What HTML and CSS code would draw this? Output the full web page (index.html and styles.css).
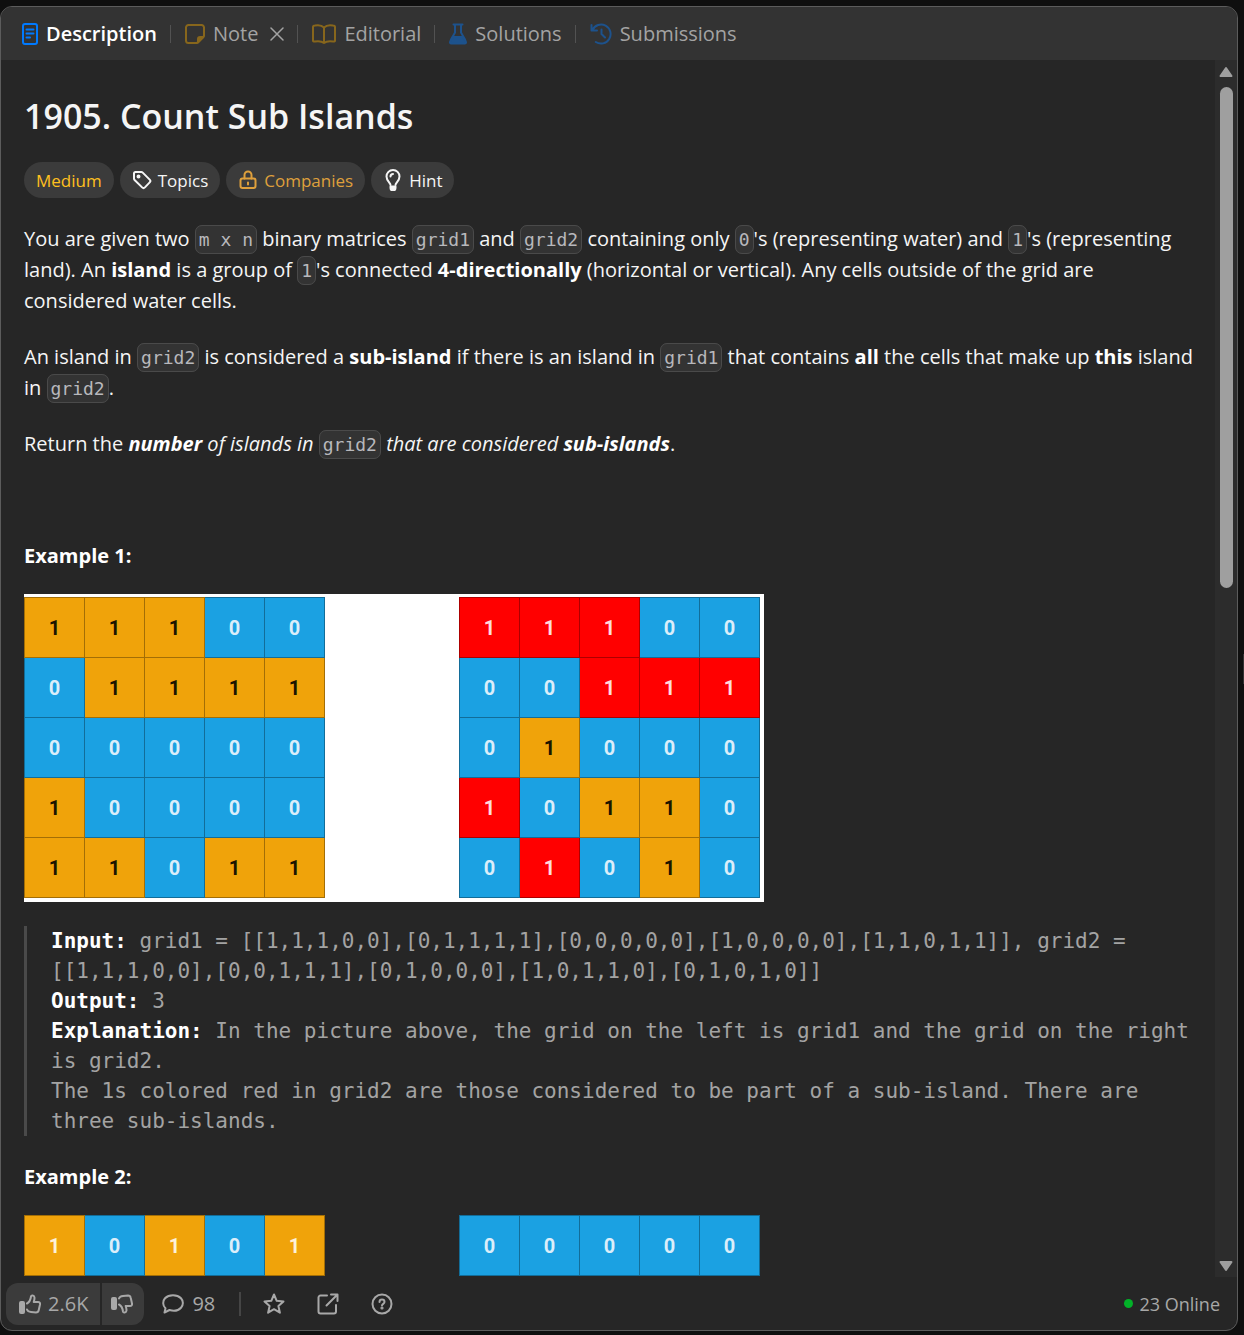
FILE: index.html
```html
<!DOCTYPE html>
<html lang="en">
<head>
<meta charset="utf-8">
<meta name="viewport" content="width=device-width, initial-scale=1">
<title>Count Sub Islands</title>
<link rel="stylesheet" href="styles.css">
</head>
<body>
<main class="panel">
  <nav class="tabs">
    <button class="tab tab-active" type="button">
      <svg class="tab-icon blue" viewBox="0 0 16 22" width="16" height="22"><rect x="1" y="1" width="14" height="20" rx="2"/><path d="M4.500 6.500h7M4.500 10.500h7M4.500 14.500h3.500"/></svg>
      Description
    </button>
    <button class="tab" type="button">
      <svg class="tab-icon gold" viewBox="0 0 20 20" width="20" height="20"><path d="M3.500 1h13A2.500 2.500 0 0 1 19 3.500V12l-7 7H3.500A2.500 2.500 0 0 1 1 16.500v-13A2.500 2.500 0 0 1 3.500 1z"/><path d="M18.500 13H15a2 2 0 0 0-2 2v3.500z" fill="currentColor"/></svg>
      Note
      <svg class="tab-icon close" viewBox="0 0 14 14" width="14" height="14"><path d="M1 1l12 12M13 1L1 13"/></svg>
    </button>
    <button class="tab" type="button">
      <svg class="tab-icon gold" viewBox="0 0 24 20" width="24" height="20"><path d="M12 3.500C9.500 1 5.500 1 3 1.500 1.500 1.500 1 2 1 3v13.500c0 1 .5 1.300 2 1 3.500-.5 6.500-.5 9 1.500 2.500-2 5.500-2 9-1.500 1.500.3 2 0 2-1V3c0-1-.5-1.500-2-1.500-2.500-.5-6.500-.5-9 2zM12 3.500V19"/></svg>
      Editorial
    </button>
    <button class="tab" type="button">
      <svg class="tab-icon navy" viewBox="0 0 18 22" width="18" height="22"><path d="M4.500 1.500h9M6 2v7.500L1.800 17M16.200 17L12 9.500V2"/><path d="M3.800 14h10.400l2.600 4.500c.5 1.300 0 2-1.200 2H2.400c-1.200 0-1.700-.7-1.200-2z" fill="currentColor"/></svg>
      Solutions
    </button>
    <button class="tab" type="button">
      <svg class="tab-icon navy" viewBox="0 0 22 22" width="22" height="22"><path d="M1.500 2v5.500H7M2.500 7A9.500 9.500 0 1 1 5.800 19M11.500 6.500V11l3.500 3.500"/></svg>
      Submissions
    </button>
  </nav>

  <div class="viewport">
    <article class="content">
      <h1>1905. Count Sub Islands</h1>
      <div class="pills">
        <span class="pill medium">Medium</span>
        <button class="pill" type="button">
          <svg class="pill-icon" viewBox="0 0 20 20" width="20" height="20"><path d="M2 3.500A1.500 1.500 0 0 1 3.500 2h5.800a2 2 0 0 1 1.400.6l7 7a2 2 0 0 1 0 2.800l-4.800 5a2 2 0 0 1-2.800 0L2.600 10A2 2 0 0 1 2 8.600z"/><circle cx="6.500" cy="6.500" r="1" fill="currentColor"/></svg>
          Topics
        </button>
        <button class="pill companies" type="button">
          <svg class="pill-icon" viewBox="0 0 20 20" width="20" height="20"><rect x="2.500" y="8.500" width="15" height="9.500" rx="2"/><path d="M6.500 8.500V5a3.500 3.500 0 0 1 7 0v3.500M10 12.500v2"/></svg>
          Companies
        </button>
        <button class="pill" type="button">
          <svg class="pill-icon" viewBox="0 0 20 22" width="20" height="22"><path d="M7.500 16c0-2.500-4-4-4-8.500a6.500 6.500 0 0 1 13 0c0 4.500-4 6-4 8.500M7.500 7.500c0-1.500 1-2.500 2.500-2.500"/><path d="M7.500 17.500h5v1.500a2.500 2.500 0 0 1-5 0z" fill="currentColor"/></svg>
          Hint
        </button>
      </div>

      <p>You are given two <code>m x n</code> binary matrices <code>grid1</code> and <code>grid2</code> containing only <code>0</code>'s (representing water) and <code>1</code>'s (representing<br>land). An <strong>island</strong> is a group of <code>1</code>'s connected <strong>4-directionally</strong> (horizontal or vertical). Any cells outside of the grid are<br>considered water cells.</p>
      <p>An island in <code>grid2</code> is considered a <strong>sub-island</strong> if there is an island in <code>grid1</code> that contains <strong>all</strong> the cells that make up <strong>this</strong> island<br>in <code>grid2</code>.</p>
      <p>Return the <em><strong>number</strong> of islands in </em><code>grid2</code> <em>that are considered <strong>sub-islands</strong></em>.</p>
      <p>&nbsp;</p>
      <p class="example"><strong>Example 1:</strong></p>

      <div class="figure figure-white">
        <table class="matrix">
          <tr><td class="land">1</td><td class="land">1</td><td class="land">1</td><td>0</td><td>0</td></tr>
          <tr><td>0</td><td class="land">1</td><td class="land">1</td><td class="land">1</td><td class="land">1</td></tr>
          <tr><td>0</td><td>0</td><td>0</td><td>0</td><td>0</td></tr>
          <tr><td class="land">1</td><td>0</td><td>0</td><td>0</td><td>0</td></tr>
          <tr><td class="land">1</td><td class="land">1</td><td>0</td><td class="land">1</td><td class="land">1</td></tr>
        </table>
        <table class="matrix">
          <tr><td class="sub">1</td><td class="sub">1</td><td class="sub">1</td><td>0</td><td>0</td></tr>
          <tr><td>0</td><td>0</td><td class="sub">1</td><td class="sub">1</td><td class="sub">1</td></tr>
          <tr><td>0</td><td class="land">1</td><td>0</td><td>0</td><td>0</td></tr>
          <tr><td class="sub">1</td><td>0</td><td class="land">1</td><td class="land">1</td><td>0</td></tr>
          <tr><td>0</td><td class="sub">1</td><td>0</td><td class="land">1</td><td>0</td></tr>
        </table>
      </div>

      <pre><strong>Input:</strong> grid1 = [[1,1,1,0,0],[0,1,1,1,1],[0,0,0,0,0],[1,0,0,0,0],[1,1,0,1,1]], grid2 = [[1,1,1,0,0],[0,0,1,1,1],[0,1,0,0,0],[1,0,1,1,0],[0,1,0,1,0]]
<strong>Output:</strong> 3
<strong>Explanation:</strong> In the picture above, the grid on the left is grid1 and the grid on the right is grid2.
The 1s colored red in grid2 are those considered to be part of a sub-island. There are three sub-islands.</pre>

      <p class="example"><strong>Example 2:</strong></p>
      <div class="figure">
        <table class="matrix matrix-light">
          <tr><td class="land">1</td><td>0</td><td class="land">1</td><td>0</td><td class="land">1</td></tr>
        </table>
        <table class="matrix matrix-light">
          <tr><td>0</td><td>0</td><td>0</td><td>0</td><td>0</td></tr>
        </table>
      </div>
    </article>
    <div class="scrollbar">
      <svg viewBox="0 0 16 12" width="16" height="12"><path d="M8 2l5.500 8h-11z"/></svg>
      <div class="track"><div class="thumb"></div></div>
      <svg viewBox="0 0 16 12" width="16" height="12"><path d="M8 10l5.500-8h-11z"/></svg>
    </div>
  </div>

  <footer class="footer">
    <div class="votes">
      <button class="vote" type="button">
        <svg class="icon" viewBox="0 0 22 20" width="22" height="20"><rect x="1" y="8" width="4" height="11" rx="1" fill="currentColor"/><path d="M8 9.500c2-1 3.500-3.500 4-7 .3-1.500 3.300-1.300 3.500 1 .1 1.500-.3 3-.8 4.500h4.300c1.500 0 2.300 1 2 2.500l-1.300 5.800c-.3 1.500-1.200 2.200-2.700 2.200l-5-.5c-2-.2-3.500-1-4-2.500"/></svg>
        2.6K
      </button>
      <button class="vote" type="button" aria-label="Dislike">
        <svg class="icon" viewBox="0 0 22 20" width="22" height="20"><rect x="1" y="4" width="4" height="11" rx="1" fill="currentColor"/><path d="M8 10.500c2 1 3.500 3.500 4 7 .3 1.500 3.300 1.300 3.500-1 .1-1.500-.3-3-.8-4.500h4.300c1.500 0 2.300-1 2-2.500l-1.300-5.800c-.3-1.500-1.200-2.200-2.700-2.200l-5 .5c-2 .2-3.500 1-4 2.500"/></svg>
      </button>
    </div>
    <button class="action comments" type="button">
      <svg class="icon" viewBox="0 0 22 20" width="22" height="20"><path d="M2.500 18.500l1-4.300C.5 11.500.5 7 3 4.300 7 .3 15 .3 19 4.300c2.500 2.700 2.500 6.700 0 9.400-3 3.300-7.500 3.500-11.500 2.300z"/></svg>
      98
    </button>
    <span class="rule"></span>
    <button class="action" type="button" aria-label="Favourite">
      <svg class="icon" viewBox="0 0 22 22" width="22" height="22"><path d="M11 1.500l2.700 6.300 6.800.6-5.100 4.600 1.500 6.700-5.900-3.500-5.900 3.500 1.500-6.700L1.500 8.400l6.800-.6z"/></svg>
    </button>
    <button class="action" type="button" aria-label="Share">
      <svg class="icon" viewBox="0 0 22 22" width="22" height="22"><path d="M10 2.500H3.500a2 2 0 0 0-2 2v14a2 2 0 0 0 2 2H17a2 2 0 0 0 2-2V12M14 1.500h6.500V8M20 2L9.500 12.500"/></svg>
    </button>
    <button class="action" type="button" aria-label="Help">
      <svg class="icon" viewBox="0 0 22 22" width="22" height="22"><circle cx="11" cy="11" r="9.500"/><path d="M8.500 9c0-3.300 5-3.300 5 0 0 1.800-2.500 1.800-2.500 3.500"/><circle cx="11" cy="15" r=".6" fill="currentColor"/></svg>
    </button>
    <span class="online">23 Online</span>
  </footer>
</main>
<div class="splitter"></div>
</body>
</html>
```

FILE: styles.css
```css
* { box-sizing: border-box; }

body {
  margin: 0;
  height: 100vh;
  padding: 6px 0 4px;
  display: flex;
  background: #0f0f0f;
  color: #f5f5f5;
  font-family: "Open Sans", "Noto Sans", sans-serif;
  font-size: 20px;
}

button {
  margin: 0;
  padding: 0;
  border: 0;
  background: none;
  color: inherit;
  font: inherit;
}

svg { display: block; flex: none; }

.panel {
  flex: 1;
  min-width: 0;
  display: flex;
  flex-direction: column;
  overflow: hidden;
  background: #262626;
  border: 1px solid #5c5c5c;
  border-radius: 12px;
}

.splitter {
  width: 6px;
  align-self: center;
  height: 30px;
  border-right: 1px solid #333;
}

/* Tabs */
.tabs {
  flex: none;
  height: 53px;
  padding-left: 21px;
  display: flex;
  align-items: center;
  background: #333;
  color: #a3a3a3;
}

.tab {
  display: flex;
  align-items: center;
  gap: 8px;
  white-space: nowrap;
}

.tab + .tab::before {
  content: "";
  width: 1px;
  height: 18px;
  margin: 0 6px 0 13px;
  background: #525252;
}

.tab-active { color: #fff; font-weight: 600; }

.tab-icon,
.pill-icon,
.icon {
  fill: none;
  stroke: currentColor;
  stroke-width: 2;
  stroke-linecap: round;
  stroke-linejoin: round;
}

.blue { color: #007aff; }
.gold { color: #87661c; }
.navy { color: #1d528c; }
.tab .close { stroke-width: 1.500; margin: 0 0 0 4px; }

/* Problem text */
.viewport { flex: 1; min-height: 0; display: flex; }

.content {
  flex: 1;
  min-width: 0;
  overflow: hidden;
  padding: 32px 24px 0 23px;
}

h1 {
  margin: 0 0 22px;
  font-size: 34px;
  line-height: 48px;
  font-weight: 600;
}

.pills { display: flex; gap: 6px; margin-bottom: 25px; }

.pill {
  display: flex;
  align-items: center;
  gap: 6px;
  height: 36px;
  padding: 0 12px;
  border-radius: 18px;
  background: #3b3b3b;
  font-size: 17px;
}

.medium { color: #ffc01e; }
.companies { color: #dfa03c; }

p { margin: 0 0 25px; line-height: 31px; white-space: nowrap; }
strong { font-weight: 700; color: #fff; }
.example { margin-bottom: 23px; }

code {
  padding: 3px;
  border: 1px solid #4a4a4a;
  border-radius: 7px;
  background: #333;
  color: #b8b8bc;
  font-family: "DejaVu Sans Mono", monospace;
  font-size: 18px;
  line-height: 20px;
}

pre {
  margin: 24px 0 25px;
  padding-left: 24px;
  border-left: 3px solid #4a4a4a;
  color: #a3a3a3;
  font-family: "DejaVu Sans Mono", monospace;
  font-size: 21px;
  line-height: 30px;
  white-space: pre-wrap;
}

/* Grid pictures */
.figure {
  max-width: 740px;
  padding-right: 4px;
  display: flex;
  justify-content: space-between;
}

.figure-white { padding: 3px 4px 4px 0; background: #fff; }

.matrix { border-spacing: 0; }

.matrix td {
  width: 60px;
  height: 60px;
  padding: 0;
  border: solid rgba(0, 0, 0, .32);
  border-width: 0 1px 1px 0;
  background: #1ba1e2;
  color: #dbeefa;
  font-family: Roboto, sans-serif;
  font-size: 20px;
  font-weight: 700;
  text-align: center;
}

.matrix td:first-child { width: 61px; border-left-width: 1px; }
.matrix tr:first-child td { height: 61px; border-top-width: 1px; }
.matrix .land { background: #f0a30a; color: #1c1400; }
.matrix .sub { background: #f00; color: #ffdcdc; }
.matrix-light .land { color: #fdf1da; }

/* Scrollbar */
.scrollbar {
  width: 22px;
  padding: 6px 0 5px;
  display: flex;
  flex-direction: column;
  align-items: center;
  gap: 9px;
  background: #2c2c2c;
}

.scrollbar path {
  fill: #9f9f9f;
  stroke: #9f9f9f;
  stroke-width: 2;
  stroke-linejoin: round;
}

.track { flex: 1; }
.thumb { width: 13px; height: 43%; border-radius: 7px; background: #9f9f9f; }

/* Footer */
.footer {
  flex: none;
  height: 53px;
  padding: 0 17px 0 5px;
  display: flex;
  align-items: center;
  color: #a8a8a8;
  font-size: 20px;
  font-weight: 500;
}

.votes {
  display: flex;
  gap: 2px;
  border-radius: 12px;
  overflow: hidden;
}

.vote {
  display: flex;
  align-items: center;
  gap: 7px;
  height: 42px;
  padding: 0 12px 0 13px;
  background: #3b3b3b;
}

.vote + .vote { padding: 0 11px 0 9px; }

.action {
  display: flex;
  align-items: center;
  gap: 8px;
  margin-right: 32px;
}

.comments { margin: 0 24px 0 18px; }

.rule { width: 2px; height: 24px; margin-right: 22px; background: #454545; }

.online {
  margin-left: auto;
  display: flex;
  align-items: center;
  gap: 6px;
  font-size: 18px;
}

.online::before {
  content: "";
  width: 9px;
  height: 9px;
  border-radius: 50%;
  background: #02b128;
}
```
